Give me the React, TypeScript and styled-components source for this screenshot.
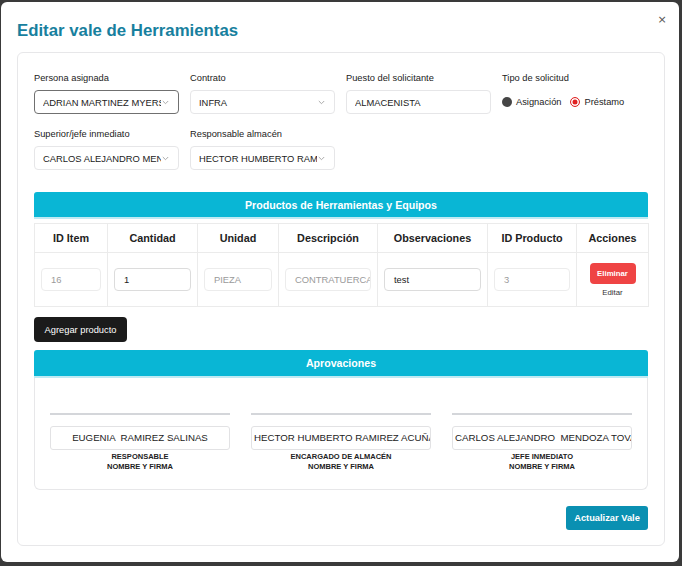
import React from "react";
import styled, { createGlobalStyle } from "styled-components";

const Global = createGlobalStyle`
  html, body { margin: 0; padding: 0; background: #3a3a3a; }
  body { font-family: "Liberation Sans", Arial, sans-serif; color: #222; }
  * { box-sizing: border-box; }
`;

const Backdrop = styled.div`
  width: 682px;
  height: 566px;
  padding: 2px 3px 4px 1px;
  background: #3a3a3a;
`;

const Modal = styled.div`
  position: relative;
  width: 678px;
  height: 560px;
  background: #fff;
  border-radius: 6px;
  padding: 0 14px 0 16px;
`;

const Header = styled.div`
  height: 50px;
  padding-top: 19px;
`;

const Title = styled.h2`
  margin: 0;
  font-size: 16.8px;
  line-height: 20px;
  font-weight: bold;
  color: #17809e;
`;

const Close = styled.button`
  position: absolute;
  top: 12px;
  right: 12px;
  border: 0;
  background: transparent;
  font-family: "DejaVu Sans", sans-serif;
  font-size: 11px;
  color: #555;
  padding: 0;
  width: 10px;
  line-height: 12px;
`;

const Card = styled.div`
  border: 1px solid #e7e7e9;
  border-radius: 6px;
  padding: 19px 16px 15px 16px;
`;

const FormGrid = styled.div`
  display: grid;
  grid-template-columns: repeat(4, 145px);
  column-gap: 11px;
  row-gap: 14px;
`;

const Field = styled.div`
  display: flex;
  flex-direction: column;
`;

const Label = styled.div`
  font-size: 9.3px;
  line-height: 12px;
  height: 12px;
  color: #222;
  margin-bottom: 6px;
  white-space: nowrap;
`;

const Box = styled.div<{ $focus?: boolean }>`
  display: flex;
  align-items: center;
  height: 24px;
  border: 1px solid ${(p) => (p.$focus ? "#707070" : "#e6e6e8")};
  border-radius: 4px;
  padding: 0 9px 0 8px;
  font-size: 9.4px;
  color: #222;
  background: #fff;
`;

const Value = styled.span`
  flex: 1;
  min-width: 0;
  white-space: nowrap;
  overflow: hidden;
`;

const Chevron = styled.svg`
  flex: none;
  margin-left: 1px;
`;

const RadioRow = styled.div`
  display: flex;
  align-items: center;
  height: 24px;
  gap: 9px;
`;

const RadioItem = styled.label`
  display: flex;
  align-items: center;
  gap: 4px;
  font-size: 9.3px;
  color: #222;
`;

const RadioDot = styled.span<{ $checked?: boolean }>`
  display: inline-block;
  width: 10px;
  height: 10px;
  border-radius: 50%;
  background: ${(p) => (p.$checked ? "#fff" : "#454545")};
  border: ${(p) => (p.$checked ? "1.5px solid #e02020" : "0")};
  box-shadow: ${(p) => (p.$checked ? "inset 0 0 0 1.5px #fff, inset 0 0 0 5px #e02020" : "none")};
`;

const Section = styled.div<{ $mt: number }>`
  margin-top: ${(p) => p.$mt}px;
`;

const SectionBar = styled.div<{ $h: number }>`
  height: ${(p) => p.$h}px;
  background: #09b6d5;
  border-radius: 3px 3px 0 0;
  border-bottom: 2px solid #bfeaf3;
  color: #fff;
  font-weight: bold;
  font-size: 10.6px;
  display: flex;
  align-items: center;
  justify-content: center;
`;

const Table = styled.table`
  margin-top: 4px;
  width: 614px;
  border-collapse: collapse;
  table-layout: fixed;
  border: 1px solid #ebebeb;
`;

const Th = styled.th`
  height: 29px;
  border: 1px solid #ebebeb;
  font-size: 10.8px;
  font-weight: bold;
  color: #222;
  text-align: center;
  padding: 0;
`;

const Td = styled.td`
  height: 54px;
  border: 1px solid #ebebeb;
  padding: 0 6px;
  vertical-align: middle;
  text-align: center;
`;

const CellInput = styled.div<{ $active?: boolean }>`
  height: 23px;
  border: 1px solid ${(p) => (p.$active ? "#dcdcdc" : "#ececec")};
  border-radius: 4px;
  font-size: 9.4px;
  line-height: 21px;
  padding: 0 2px 0 9px;
  text-align: left;
  color: ${(p) => (p.$active ? "#222" : "#9a9a9a")};
  white-space: nowrap;
  overflow: hidden;
`;

const DangerButton = styled.button`
  display: block;
  margin: 0 auto;
  width: 46px;
  height: 21px;
  border: 0;
  border-radius: 4px;
  background: #ef4444;
  color: #fff;
  font-family: "Liberation Sans", Arial, sans-serif;
  font-size: 7.8px;
  font-weight: bold;
  padding: 0;
`;

const LinkText = styled.div`
  margin-top: 4px;
  font-size: 7.8px;
  color: #333;
`;

const DarkButton = styled.button`
  margin-top: 10px;
  width: 93px;
  height: 25px;
  border: 0;
  border-radius: 4px;
  background: #1b1b1b;
  color: #fff;
  font-family: "Liberation Sans", Arial, sans-serif;
  font-size: 9.3px;
  padding: 0;
`;

const ApprovalBody = styled.div`
  border: 1px solid #e7e7e9;
  border-top: 0;
  border-radius: 0 0 6px 6px;
  padding: 35px 15px 17px;
  display: grid;
  grid-template-columns: repeat(3, 180px);
  column-gap: 21px;
`;

const Sign = styled.div`
  display: flex;
  flex-direction: column;
  align-items: stretch;
`;

const SignLine = styled.div`
  height: 2px;
  background: #d4d6da;
  margin-bottom: 11px;
`;

const SignName = styled.div`
  height: 24px;
  border: 1px solid #e2e2e4;
  border-radius: 3px;
  padding: 0 2px;
  font-size: 9.7px;
  line-height: 22px;
  text-align: center;
  white-space: pre;
  overflow: hidden;
  color: #222;
`;

const SignCaption = styled.div`
  margin-top: 2px;
  font-size: 7.5px;
  line-height: 10px;
  font-weight: bold;
  text-align: center;
  color: #222;
`;

const Footer = styled.div`
  margin-top: 16px;
  display: flex;
  justify-content: flex-end;
`;

const PrimaryButton = styled.button`
  width: 82px;
  height: 24px;
  border: 0;
  border-radius: 3px;
  background: #0a90b2;
  color: #fff;
  font-family: "Liberation Sans", Arial, sans-serif;
  font-size: 9.3px;
  font-weight: bold;
  padding: 0;
`;

const Chev = () => (
  <Chevron width="7" height="5" viewBox="0 0 7 5">
    <path d="M0.8 1 L3.5 3.7 L6.2 1" fill="none" stroke="#a0a0a0" strokeWidth="0.9" />
  </Chevron>
);

const Select = ({ value, focus }: { value: string; focus?: boolean }) => (
  <Box $focus={focus}>
    <Value>{value}</Value>
    <Chev />
  </Box>
);

const columns = [
  { name: "ID Item", w: 73 },
  { name: "Cantidad", w: 90 },
  { name: "Unidad", w: 81 },
  { name: "Descripción", w: 99 },
  { name: "Observaciones", w: 110 },
  { name: "ID Producto", w: 89 },
  { name: "Acciones", w: 72 },
];

const signers = [
  { name: "EUGENIA  RAMIREZ SALINAS", role: "RESPONSABLE" },
  { name: "HECTOR HUMBERTO RAMIREZ ACUÑA", role: "ENCARGADO DE ALMACÉN" },
  { name: "CARLOS ALEJANDRO  MENDOZA TOVAR", role: "JEFE INMEDIATO" },
];

export default function App() {
  return (
    <Backdrop>
      <Global />
      <Modal>
        <Header>
          <Title>Editar vale de Herramientas</Title>
        </Header>
        <Close>×</Close>
        <Card>
          <FormGrid>
            <Field>
              <Label>Persona asignada</Label>
              <Select value="ADRIAN MARTINEZ MYERS" focus />
            </Field>
            <Field>
              <Label>Contrato</Label>
              <Select value="INFRA" />
            </Field>
            <Field>
              <Label>Puesto del solicitante</Label>
              <Box>
                <Value>ALMACENISTA</Value>
              </Box>
            </Field>
            <Field>
              <Label>Tipo de solicitud</Label>
              <RadioRow>
                <RadioItem>
                  <RadioDot />
                  Asignación
                </RadioItem>
                <RadioItem>
                  <RadioDot $checked />
                  Préstamo
                </RadioItem>
              </RadioRow>
            </Field>
            <Field>
              <Label>Superior/jefe inmediato</Label>
              <Select value="CARLOS ALEJANDRO MENDOZA TOVAR" />
            </Field>
            <Field>
              <Label>Responsable almacén</Label>
              <Select value="HECTOR HUMBERTO RAMIREZ ACUÑA" />
            </Field>
          </FormGrid>

          <Section $mt={22}>
            <SectionBar $h={27}>Productos de Herramientas y Equipos</SectionBar>
            <Table>
              <colgroup>
                {columns.map((c) => (
                  <col key={c.name} style={{ width: c.w }} />
                ))}
              </colgroup>
              <thead>
                <tr>
                  {columns.map((c) => (
                    <Th key={c.name}>{c.name}</Th>
                  ))}
                </tr>
              </thead>
              <tbody>
                <tr>
                  <Td><CellInput>16</CellInput></Td>
                  <Td><CellInput $active>1</CellInput></Td>
                  <Td><CellInput>PIEZA</CellInput></Td>
                  <Td><CellInput>CONTRATUERCA</CellInput></Td>
                  <Td><CellInput $active>test</CellInput></Td>
                  <Td><CellInput>3</CellInput></Td>
                  <Td>
                    <DangerButton>Eliminar</DangerButton>
                    <LinkText>Editar</LinkText>
                  </Td>
                </tr>
              </tbody>
            </Table>
          </Section>

          <DarkButton>Agregar producto</DarkButton>

          <Section $mt={8}>
            <SectionBar $h={28}>Aprovaciones</SectionBar>
            <ApprovalBody>
              {signers.map((s) => (
                <Sign key={s.role}>
                  <SignLine />
                  <SignName>{s.name}</SignName>
                  <SignCaption>
                    {s.role}
                    <br />
                    NOMBRE Y FIRMA
                  </SignCaption>
                </Sign>
              ))}
            </ApprovalBody>
          </Section>

          <Footer>
            <PrimaryButton>Actualizar Vale</PrimaryButton>
          </Footer>
        </Card>
      </Modal>
    </Backdrop>
  );
}
